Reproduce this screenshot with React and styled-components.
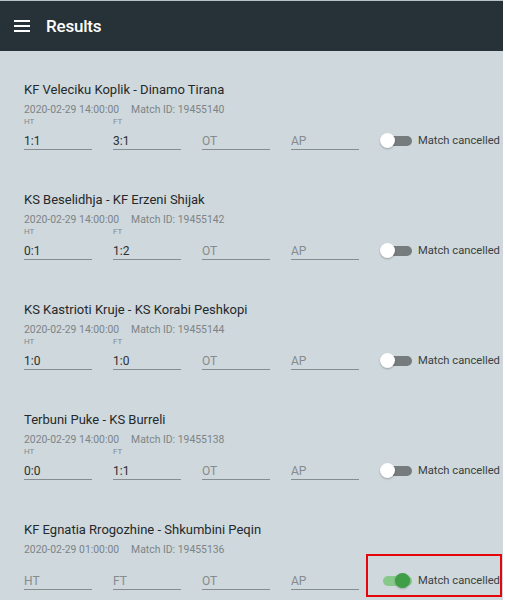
import React from 'react'
import styled, { createGlobalStyle } from 'styled-components'

const GlobalStyle = createGlobalStyle`
  body {
    margin: 0;
    background: #ffffff;
    font-family: Roboto, "Liberation Sans", sans-serif;
  }
`

const Page = styled.div`
  width: 503px;
  height: 600px;
  overflow: hidden;
  background: #cfd8dc;
  border-top: 1px solid #b9c2c6;
  box-sizing: border-box;
`

const Header = styled.header`
  height: 50px;
  background: #263238;
  display: flex;
  align-items: center;
  padding-left: 14px;
  gap: 16px;
  color: #ffffff;
`

const Burger = styled.div`
  width: 16px;
  display: flex;
  flex-direction: column;
  gap: 3px;
  span {
    display: block;
    height: 2px;
    background: #ffffff;
  }
`

const Title = styled.h1`
  margin: 0;
  font-size: 17px;
  font-weight: 500;
  letter-spacing: -0.2px;
`

const List = styled.div`
  padding: 30px 0 0 24px;
`

const Card = styled.article`
  height: 110px;
`

const MatchName = styled.div`
  font-size: 13px;
  line-height: 18px;
  color: #25292b;
`

const Meta = styled.div`
  margin-top: 4px;
  font-size: 10.4px;
  line-height: 14px;
  color: #7d8487;
  display: flex;
  gap: 12px;
`

const Row = styled.div`
  display: flex;
  gap: 21px;
  align-items: flex-end;
`

const Field = styled.div`
  width: 68px;
  flex-shrink: 0;
  display: flex;
  flex-direction: column;
`

const Label = styled.span`
  font-size: 8px;
  line-height: 10px;
  color: #858b8e;
  visibility: ${(p) => (p.$hidden ? 'hidden' : 'visible')};
`

const Value = styled.div`
  padding-top: 6px;
  font-size: 12px;
  line-height: 16px;
  color: ${(p) => (p.$placeholder ? '#858b8e' : '#2b2f31')};
  border-bottom: 1px solid #868d90;
  margin-bottom: 1px;
`

const Cancel = styled.label`
  position: relative;
  flex-shrink: 0;
  display: flex;
  align-items: center;
  gap: 6px;
  height: 16px;
  margin-bottom: 3px;
  font-size: 11.2px;
  color: #3a3f41;
  white-space: nowrap;
`

const Highlight = styled.span`
  position: absolute;
  left: -14px;
  right: -2px;
  top: -18px;
  bottom: -9px;
  border: 2px solid #e5050b;
`

const Switch = styled.span`
  position: relative;
  width: 32px;
  height: 15px;
  display: inline-block;
  &::before {
    content: '';
    position: absolute;
    left: 3px;
    right: 0;
    top: 3px;
    height: 10px;
    border-radius: 5px;
    background: ${(p) => (p.$on ? '#86c98a' : '#767b7d')};
  }
  &::after {
    content: '';
    position: absolute;
    top: 0;
    left: ${(p) => (p.$on ? '15px' : '0')};
    width: 15px;
    height: 15px;
    border-radius: 50%;
    background: ${(p) => (p.$on ? '#3f9e46' : '#ffffff')};
    box-shadow: 0 1px 2px rgba(0, 0, 0, 0.25);
  }
`

const matches = [
  { id: 19455140, name: 'KF Veleciku Koplik - Dinamo Tirana', date: '2020-02-29 14:00:00', ht: '1:1', ft: '3:1' },
  { id: 19455142, name: 'KS Beselidhja - KF Erzeni Shijak', date: '2020-02-29 14:00:00', ht: '0:1', ft: '1:2' },
  { id: 19455144, name: 'KS Kastrioti Kruje - KS Korabi Peshkopi', date: '2020-02-29 14:00:00', ht: '1:0', ft: '1:0' },
  { id: 19455138, name: 'Terbuni Puke - KS Burreli', date: '2020-02-29 14:00:00', ht: '0:0', ft: '1:1' },
  { id: 19455136, name: 'KF Egnatia Rrogozhine - Shkumbini Peqin', date: '2020-02-29 01:00:00', cancelled: true },
]

const ScoreField = ({ label, value }) => (
  <Field>
    <Label $hidden={!value}>{label}</Label>
    <Value $placeholder={!value}>{value || label}</Value>
  </Field>
)

const App = () => {
  return (
    <Page>
      <GlobalStyle />
      <Header>
        <Burger>
          <span />
          <span />
          <span />
        </Burger>
        <Title>Results</Title>
      </Header>
      <List>
        {matches.map((m) => (
          <Card key={m.id}>
            <MatchName>{m.name}</MatchName>
            <Meta>
              <span>{m.date}</span>
              <span>Match ID: {m.id}</span>
            </Meta>
            <Row>
              <ScoreField label='HT' value={m.ht} />
              <ScoreField label='FT' value={m.ft} />
              <ScoreField label='OT' />
              <ScoreField label='AP' />
              <Cancel>
                {m.cancelled && <Highlight />}
                <Switch $on={m.cancelled} />
                Match cancelled
              </Cancel>
            </Row>
          </Card>
        ))}
      </List>
    </Page>
  )
}

export default App
